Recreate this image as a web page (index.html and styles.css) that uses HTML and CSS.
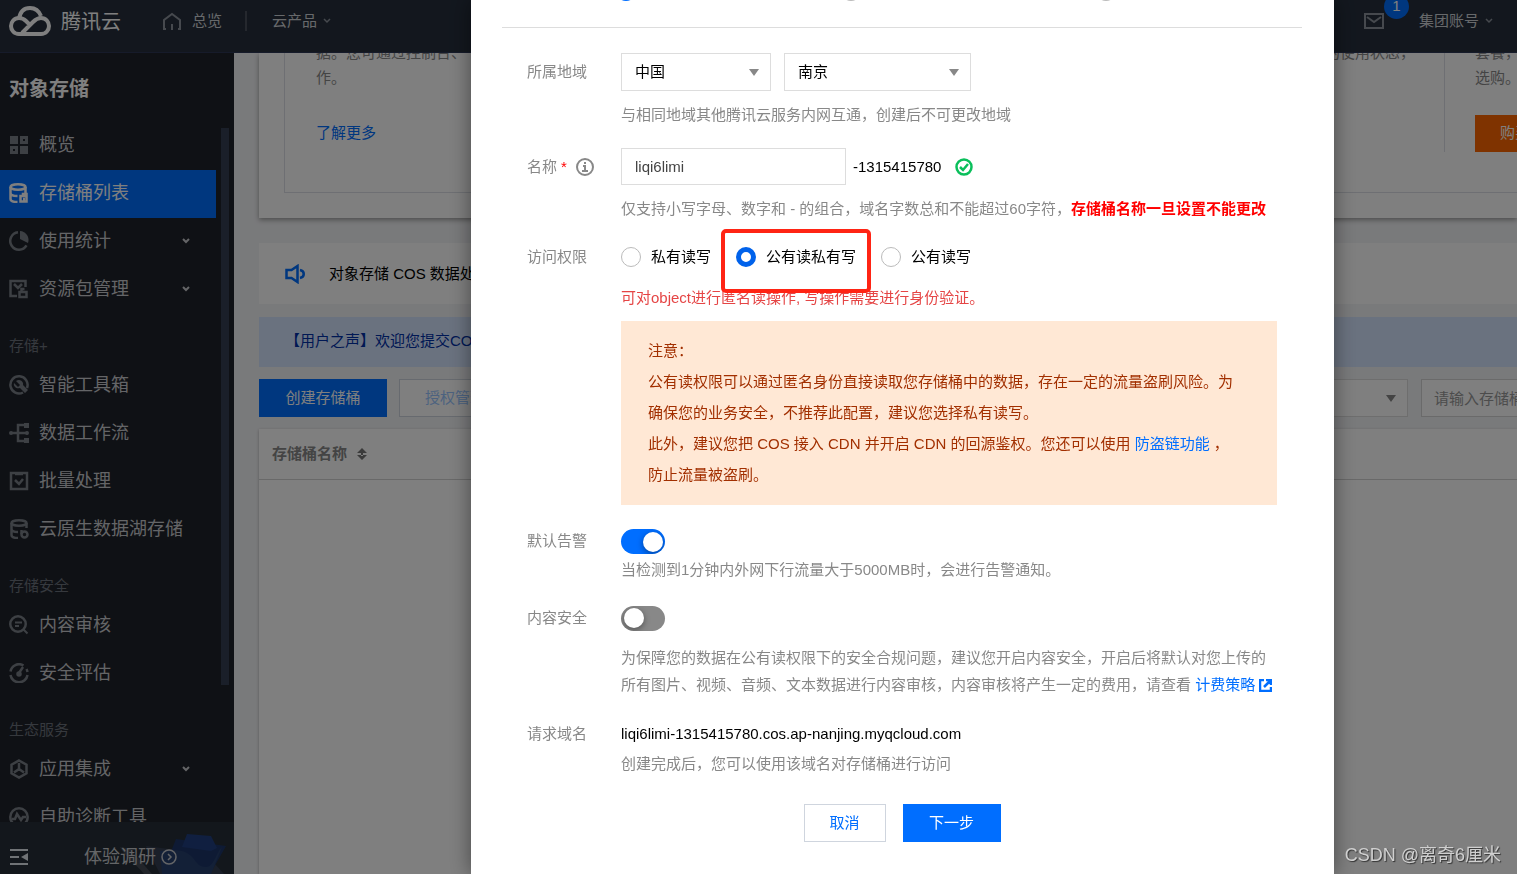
FILE: index.html
```html
<!DOCTYPE html>
<html lang="zh-CN">
<head>
<meta charset="utf-8">
<title>对象存储 - 创建存储桶</title>
<link rel="stylesheet" href="styles.css">
</head>
<body>
<div class="app">
  <header class="topbar">
    <svg class="logo" width="42" height="30" viewBox="0 0 42 30" fill="none" stroke="currentColor" stroke-width="4" stroke-linecap="butt" aria-hidden="true">
      <path d="M10 13C11 6 15 2 21 2c6 0 9 3 11 8"/>
      <path d="M20 18l-3-3c-2-2-4-3-7-3-5 0-8 4-8 8s3 8 8 8h22c5 0 8-4 8-8s-3-8-8-8c-4 0-6 2-8 4L13 27"/>
    </svg>
    <span class="brand">腾讯云</span>
    <a class="toplink home" href="#">
      <svg width="20" height="19" viewBox="0 0 20 19" fill="none" stroke="currentColor" stroke-width="2" aria-hidden="true"><path d="M4 17H2V8l8-6 8 6v9h-2M10 12v6"/></svg>
      总览
    </a>
    <span class="divider"></span>
    <a class="toplink products" href="#">云产品
      <svg width="8" height="6" viewBox="0 0 8 6" fill="none" stroke="currentColor" stroke-width="1.5" aria-hidden="true"><path d="M1 1l3 3 3-3"/></svg>
    </a>
    <a class="mail" href="#" aria-label="消息">
      <svg width="20" height="16" viewBox="0 0 20 16" fill="none" stroke="currentColor" stroke-width="2" aria-hidden="true"><path d="M1 1h18v14H1zM3 4l7 5 7-5"/></svg>
      <span class="badge">1</span>
    </a>
    <a class="toplink" href="#">集团账号
      <svg width="8" height="6" viewBox="0 0 8 6" fill="none" stroke="currentColor" stroke-width="1.5" aria-hidden="true"><path d="M1 1l3 3 3-3"/></svg>
    </a>
  </header>

  <div class="body">
    <aside class="sidebar">
      <h1 class="side-title">对象存储</h1>
      <nav class="side-nav">
        <div class="side-list">
          <a class="item" href="#"><svg width="20" height="20" viewBox="0 0 20 20" fill="none" stroke="currentColor" stroke-width="3"><path d="M1 1h8v8H1zM11 11h8v8h-8z" fill="currentColor" stroke="none"/><path d="M12.500 2.500h5v5h-5zM2.500 12.500h5v5h-5z"/></svg>概览</a>
          <a class="item active" href="#"><svg width="20" height="20" viewBox="0 0 20 20" fill="none" stroke="currentColor" stroke-width="2.500"><ellipse cx="9" cy="4" rx="7.500" ry="2.750"/><path d="M1.500 4v12c0 2 3 3 7 3M1.500 10c0 2 3 3 7 3M16.500 4v6"/><path d="M11.500 13h6v5.500h-6zM14 13v-2h3.500v2M14 16h2"/></svg>存储桶列表</a>
          <a class="item" href="#"><svg width="20" height="20" viewBox="0 0 20 20" fill="none" stroke="currentColor" stroke-width="2.500"><path d="M9 1.300a8.700 8.700 0 1 0 8.500 13"/><path d="M11 0a9 9 0 0 1 8 12l-8-4z" fill="currentColor" stroke="none"/></svg>使用统计<svg class="arrow" width="8" height="6" viewBox="0 0 8 6" fill="none" stroke="currentColor" stroke-width="2"><path d="M1 1l3 3 3-3"/></svg></a>
          <a class="item" href="#"><svg width="20" height="20" viewBox="0 0 20 20" fill="none" stroke="currentColor" stroke-width="2.500"><path d="M8 17H1.500V2h15v6M5 5l4 4 4-4"/><path d="M10.500 13h7v5h-7zM12.500 13v-3h3"/></svg>资源包管理<svg class="arrow" width="8" height="6" viewBox="0 0 8 6" fill="none" stroke="currentColor" stroke-width="2"><path d="M1 1l3 3 3-3"/></svg></a>
          <h2 class="group">存储+</h2>
          <a class="item" href="#"><svg width="20" height="20" viewBox="0 0 20 20" fill="none" stroke="currentColor" stroke-width="2.500"><path d="M14 17.500A8.600 8.600 0 1 1 18 13"/><path d="M5 8l4 4 2-2-4-4c4-3 8 1 7 4l5 5-3 3-5-5c-3 1-7-1-6-5z" fill="currentColor" stroke="none"/></svg>智能工具箱</a>
          <a class="item" href="#"><svg width="20" height="20" viewBox="0 0 20 20" fill="none" stroke="currentColor" stroke-width="2.500"><path d="M2 10h17M15 2H9v16h6"/><path d="M15 0h5v5h-5zM15 15h5v5h-5z" fill="currentColor" stroke="none"/><circle cx="2" cy="10" r="2" fill="currentColor" stroke="none"/><circle cx="18" cy="10" r="2" fill="currentColor" stroke="none"/></svg>数据工作流</a>
          <a class="item" href="#"><svg width="20" height="20" viewBox="0 0 20 20" fill="none" stroke="currentColor" stroke-width="2.500"><path d="M2 2h16v16H2zM6 3h8M6 9l4 4 4-5"/></svg>批量处理</a>
          <a class="item" href="#"><svg width="20" height="20" viewBox="0 0 20 20" fill="none" stroke="currentColor" stroke-width="2.500"><ellipse cx="10" cy="4" rx="7.500" ry="2.750"/><path d="M2.500 4v12c0 2 3 3 6.500 3M2.500 10c0 2 3 3 6.500 3M17.500 4v5"/><circle cx="15.500" cy="15.500" r="3"/><path d="M12.500 11v4"/></svg>云原生数据湖存储</a>
          <h2 class="group">存储安全</h2>
          <a class="item" href="#"><svg width="20" height="20" viewBox="0 0 20 20" fill="none" stroke="currentColor" stroke-width="2.500"><circle cx="9" cy="9" r="7.750"/><path d="M14.500 14.500l4 4M6 7.500h7M6 11h4" stroke-width="2"/></svg>内容审核</a>
          <a class="item" href="#"><svg width="20" height="20" viewBox="0 0 20 20" fill="none" stroke="currentColor" stroke-width="2.500"><path d="M1.500 8.500a8.600 8.600 0 0 1 13-6M17.500 6a8.600 8.600 0 0 1 1 3M1.500 12a8.600 8.600 0 0 0 17 0M10 10l4-6"/><circle cx="10" cy="11" r="2.750" fill="currentColor" stroke="none"/></svg>安全评估</a>
          <h2 class="group">生态服务</h2>
          <a class="item" href="#"><svg width="20" height="20" viewBox="0 0 20 20" fill="none" stroke="currentColor" stroke-width="2.500"><path d="M10 1.500l7.500 4.200v8.600L10 18.500l-7.500-4.200V5.700zM10 4v6l-5 3.500M10 10l5 3.500"/></svg>应用集成<svg class="arrow" width="8" height="6" viewBox="0 0 8 6" fill="none" stroke="currentColor" stroke-width="2"><path d="M1 1l3 3 3-3"/></svg></a>
          <a class="item" href="#"><svg width="20" height="20" viewBox="0 0 20 20" fill="none" stroke="currentColor" stroke-width="2.500"><circle cx="10" cy="10" r="8.700"/><path d="M3 12h3l2-5 4 6 2-3h3"/></svg>自助诊断工具</a>
        </div>
        <div class="thumb"></div>
      </nav>
      <div class="side-foot">
        <svg class="art" width="115" height="52" viewBox="0 0 115 52" aria-hidden="true">
          <path d="M4 25l10 2 22 25H28C18 40 10 36 4 25z" fill="#454a54"/>
          <path d="M30 24l60 8 18 20H44z" fill="#343e52"/>
          <path d="M60 17l50 7-16 28H46z" fill="#1d3568"/>
          <path d="M71 12l24 2 6 12-6 3-29-4z" fill="#203f80"/>
          <path d="M44 29c40-6 30 16 46 16 8 0 10-14 16-20l-11 27H46z" fill="#27406f"/>
        </svg>
        <button class="fold" type="button" aria-label="收起菜单"><svg width="18" height="16" viewBox="0 0 18 16" fill="none" stroke="currentColor" stroke-width="2"><path d="M0 1h18M0 8h9M0 15h18"/><path d="M18 4v8l-7-4z" fill="currentColor" stroke="none"/></svg></button>
        <a class="survey" href="#">体验调研<svg width="16" height="16" viewBox="0 0 16 16" fill="none" stroke="currentColor" stroke-width="1.500"><circle cx="8" cy="8" r="7"/><path d="M7 5l3 3-3 3"/></svg></a>
      </div>
    </aside>

    <main class="main">
      <section class="intro">
        <div class="intro-box">
          <div class="col first"><p>据。您可通过控制台、<br>作。</p><a href="#">了解更多</a></div>
          <div class="col second"><p>的使用状态，</p></div>
          <div class="col third"><p>套餐，<br>选购。</p><button type="button">购买</button></div>
        </div>
      </section>
      <section class="notice">
        <svg width="20" height="20" viewBox="0 0 20 20" fill="none" stroke="currentColor" stroke-width="2.500" aria-hidden="true"><path d="M1.500 6h5l6-4v16l-6-4h-5zM15 6c5 1 5 7 0 8"/></svg>
        对象存储 COS 数据处理
      </section>
      <section class="voice">【用户之声】欢迎您提交COS</section>
      <div class="toolbar">
        <button class="btn create" type="button">创建存储桶</button>
        <button class="btn auth" type="button">授权管理</button>
        <span class="pick filter"><select aria-label="筛选"><option></option></select></span>
        <input class="search" type="text" aria-label="搜索存储桶" placeholder="请输入存储桶名称">
      </div>
      <table class="buckets">
        <thead><tr><th scope="col">存储桶名称<svg width="10" height="12" viewBox="0 0 10 12" fill="currentColor" aria-hidden="true"><path d="M5 0l5 5H0zM5 12l5-5H0zM4 4h2v4H4z"/></svg></th></tr></thead>
      </table>
    </main>
  </div>
</div>

<div class="overlay">
  <div class="dialog" role="dialog" aria-label="创建存储桶">
    <div class="steps"><i class="on"></i><i class="mid"></i><i></i></div>
    <form class="form">
      <div class="row">
        <label class="name tall" for="country">所属地域</label>
        <div class="field">
          <div class="line regions">
            <span class="pick country"><select id="country"><option>中国</option></select></span>
            <span class="pick city"><select aria-label="城市"><option>南京</option></select></span>
          </div>
          <p class="help">与相同地域其他腾讯云服务内网互通，创建后不可更改地域</p>
        </div>
      </div>
      <div class="row">
        <label class="name tall" for="bucket">名称<b>*</b><svg width="18" height="18" viewBox="0 0 18 18" fill="none" stroke="currentColor" stroke-width="2" aria-hidden="true"><circle cx="9" cy="9" r="8"/><path d="M7 8h2v5M6 13h6M8 5h2"/></svg></label>
        <div class="field">
          <div class="line">
            <input class="bucket" id="bucket" type="text" value="liqi6limi">
            <span class="suffix">-1315415780</span>
            <svg class="ok" width="18" height="18" viewBox="0 0 18 18" fill="none" stroke="currentColor" stroke-width="2.500" aria-hidden="true"><circle cx="9" cy="9" r="7.500"/><path d="M5 9l3 3 5-6"/></svg>
          </div>
          <p class="help">仅支持小写字母、数字和 - 的组合，域名字数总和不能超过60字符，<strong>存储桶名称一旦设置不能更改</strong></p>
        </div>
      </div>
      <div class="row">
        <span class="name" id="access">访问权限</span>
        <div class="field">
          <div class="line radios" role="radiogroup" aria-labelledby="access">
            <label><input type="radio" name="acl">私有读写</label>
            <label class="marked"><input type="radio" name="acl" checked>公有读私有写</label>
            <label><input type="radio" name="acl">公有读写</label>
          </div>
          <p class="help warn">可对object进行匿名读操作, 写操作需要进行身份验证。</p>
          <div class="caution">
            <p>注意：</p>
            <p>公有读权限可以通过匿名身份直接读取您存储桶中的数据，存在一定的流量盗刷风险。为确保您的业务安全，不推荐此配置，建议您选择私有读写。</p>
            <p>此外，建议您把 COS 接入 CDN 并开启 CDN 的回源鉴权。您还可以使用 <a href="#">防盗链功能</a> ，防止流量被盗刷。</p>
          </div>
        </div>
      </div>
      <div class="row">
        <label class="name" for="alarm">默认告警</label>
        <div class="field">
          <input class="switch" id="alarm" type="checkbox" checked>
          <p class="help near">当检测到1分钟内外网下行流量大于5000MB时，会进行告警通知。</p>
        </div>
      </div>
      <div class="row">
        <label class="name" for="safety">内容安全</label>
        <div class="field">
          <input class="switch" id="safety" type="checkbox">
          <p class="help long">为保障您的数据在公有读权限下的安全合规问题，建议您开启内容安全，开启后将默认对您上传的所有图片、视频、音频、文本数据进行内容审核，内容审核将产生一定的费用，请查看 <a href="#">计费策略<svg width="13" height="13" viewBox="0 0 13 13" fill="none" stroke="currentColor" stroke-width="2.500" aria-hidden="true"><path d="M5 1H1v11h11V8M5 8l6-6M7 1h5v5"/></svg></a></p>
        </div>
      </div>
      <div class="row last">
        <span class="name">请求域名</span>
        <div class="field">
          <p class="domain">liqi6limi-1315415780.cos.ap-nanjing.myqcloud.com</p>
          <p class="help after">创建完成后，您可以使用该域名对存储桶进行访问</p>
        </div>
      </div>
      <div class="actions">
        <button class="btn cancel" type="button">取消</button>
        <button class="btn next" type="button">下一步</button>
      </div>
    </form>
  </div>
</div>
<div class="watermark">CSDN @离奇6厘米</div>
</body>
</html>
```
FILE: styles.css
```css
* { box-sizing: border-box; }
body, p, h1, h2 { margin: 0; }
body, button, input, select {
  font-family: "Liberation Sans", "Noto Sans CJK SC", sans-serif;
  font-size: 15px;
  line-height: 24px;
}
body { overflow: hidden; color: #000; }
a { color: #006eff; text-decoration: none; }
svg { flex: none; }
button { padding: 0; border: 0; background: none; white-space: nowrap; }

.app { display: flex; flex-direction: column; height: 100vh; background: #f3f4f7; }

/* Top bar */
.topbar {
  display: flex; align-items: center; flex: none;
  height: 53px; padding: 0 24px 10px 9px;
  background: #262f3d; border-bottom: 1px solid #2c3654; color: #cfd2d6;
}
.logo { margin-right: 10px; color: #fff; }
.brand { padding-top: 2px; font-size: 20px; line-height: 30px; color: #fff; }
.toplink { display: flex; align-items: center; gap: 10px; color: #cfd2d6; white-space: nowrap; }
.toplink svg { color: #8d939c; }
.home { margin-left: 41px; }
.divider { width: 2px; height: 20px; margin: 0 25px 0 23px; background: #4a515c; }
.products, .toplink:last-child { gap: 6px; }
.mail { position: relative; display: flex; margin-left: auto; margin-right: 35px; color: #8d939c; }
.badge {
  position: absolute; left: 20px; bottom: 10px;
  width: 25px; height: 25px; border-radius: 13px;
  background: #006eff; color: #fff; text-align: center;
}

.body { display: flex; flex: 1; min-height: 0; }

/* Side menu */
.sidebar { display: flex; flex-direction: column; flex: none; width: 234px; background: #1f222a; }
.side-title { padding: 21px 9px 18px; font-size: 20px; line-height: 30px; color: #fff; }
.side-nav { display: flex; flex: 1; min-height: 0; overflow: hidden; }
.side-list { width: 216px; }
.item {
  display: flex; align-items: center; gap: 10px;
  height: 48px; padding: 0 26px 2px 9px;
  font-size: 18px; color: #c8cace; white-space: nowrap;
}
.item svg { color: #7a8088; }
.item .arrow { margin-left: auto; color: #c8cace; }
.item.active { background: #006eff; color: #fff; }
.item.active svg { color: #fff; }
.group { height: 48px; padding: 20px 9px 4px; font-size: 15px; font-weight: 400; color: #6c727c; }
.thumb { width: 8px; height: 557px; margin: 6px 0 0 5px; background: #343f52; }
.side-foot { position: relative; display: flex; align-items: center; flex: none; height: 52px; padding: 18px 10px 0; background: #262f38; overflow: hidden; }
.art { position: absolute; right: 3px; bottom: 0; }
.fold { position: relative; display: flex; width: 18px; color: #e0e6ec; }
.survey { position: relative; display: flex; align-items: center; gap: 5px; margin-left: 56px; font-size: 18px; color: #c8cace; }

/* Page content behind the dialog */
.main { display: flex; flex-direction: column; flex: 1; min-width: 0; padding-left: 25px; overflow: hidden; }
.intro { flex: none; padding: 0 0 25px 25px; margin-bottom: 25px; background: #fff; box-shadow: 0 2px 5px #9a9a9a; }
.intro-box { display: flex; height: 140px; border: 1px solid #dcdfe6; border-width: 0 0 1px 1px; overflow: hidden; color: #888; line-height: 25px; }
.col p { margin-top: -13px; white-space: nowrap; }
.first { flex: 1; padding-left: 31px; }
.first a { display: block; margin-top: 30px; }
.second { flex: 1; height: 99px; padding-right: 29px; border-right: 1px solid #dcdfe6; text-align: right; }
.third { width: 72px; padding-left: 30px; overflow: hidden; }
.third button { width: 100px; height: 37px; margin-top: 25px; padding: 0 0 1px 25px; background: #ff6600; color: #fff; text-align: left; }
.notice { display: flex; align-items: center; gap: 24px; flex: none; height: 61px; padding-left: 26px; margin-bottom: 13px; background: #fff; }
.notice svg { color: #006eff; }
.voice { flex: none; height: 50px; margin-bottom: 12px; padding-left: 26px; background: #d5e5ff; color: #0030a8; line-height: 48px; }
.toolbar { display: flex; flex: none; margin-bottom: 12px; }
.btn { height: 38px; padding-bottom: 1px; border: 1px solid transparent; }
.create { width: 128px; background: #006eff; color: #fff; }
.auth { width: 112px; margin-left: 12px; border-color: #cfd5de; background: #fff; color: #99c5ff; }
.filter { width: 187px; margin: 0 13px 0 auto; }
.search { width: 96px; height: 38px; padding: 0 0 0 12px; border: 1px solid #d5d5d5; border-right: 0; border-radius: 0; }
.search::placeholder { color: #999; opacity: 1; }
.buckets { width: 100%; height: 445px; border-collapse: collapse; background: #fff; box-shadow: 0 1px 3px #b0b0b0; }
.buckets thead { display: table; width: 100%; border-bottom: 1px solid #d2d2d2; }
.buckets th { height: 50px; padding: 0 13px; text-align: left; color: #888; }
.buckets svg { margin-left: 10px; vertical-align: -1px; color: #777; }

/* Shared controls */
.pick { position: relative; display: block; height: 38px; }
.pick select {
  appearance: none; width: 100%; height: 38px; padding: 0 30px 0 13px;
  border: 1px solid #ddd; border-radius: 0; background: #fff; color: #000;
}
.pick::after {
  content: ""; position: absolute; right: 12px; top: 16px;
  border: 5px solid transparent; border-top: 7px solid #888; border-bottom: 0;
}

/* Dialog */
.overlay { position: fixed; inset: 0; display: flex; justify-content: center; padding-left: 288px; background: rgba(0, 0, 0, .5); }
.dialog { width: 863px; padding: 0 32px 0 31px; overflow: hidden; background: #fff; box-shadow: 0 0 20px rgba(0, 0, 0, .45); }
.steps { display: flex; height: 47px; margin-top: -19px; padding-left: 114px; border-bottom: 1px solid #ddd; }
.steps i { width: 20px; height: 20px; border-radius: 10px; background: #bbb; }
.steps .on { margin-right: 205px; background: #006eff; }
.steps .mid { margin-right: 235px; }
.form { padding: 25px 25px 0; }
.row { display: flex; margin-bottom: 24px; }
.row:first-child { margin-bottom: 21px; }
.row.last { margin-bottom: 22px; }
.name { display: flex; align-items: center; flex: none; width: 94px; height: 24px; color: #888; }
.name.tall { height: 37px; }
.name b { margin: 0 9px 0 4px; font-weight: 400; color: #f00; }
.field { flex: 1; min-width: 0; }
.line { display: flex; align-items: center; }
.regions { gap: 13px; }
.country { width: 150px; }
.city { width: 187px; }
.help { margin-top: 12px; color: #888; }
.help strong { color: #f00; }
.bucket { width: 225px; height: 37px; padding: 0 13px; border: 1px solid #ddd; border-radius: 0; color: #444; }
.suffix { margin: 0 14px 0 7px; }
.ok { color: #0abf5b; }
.radios { gap: 25px; height: 24px; }
.radios label { position: relative; display: flex; align-items: center; gap: 10px; white-space: nowrap; }
.radios input { appearance: none; width: 20px; height: 20px; margin: 0; border: 1px solid #bbb; border-radius: 10px; }
.radios input:checked { border: 5px solid #0062eb; }
.marked::after { content: ""; position: absolute; inset: -16px -15px -24px; border: 4px solid #ff2414; border-radius: 5px; }
.help.warn { margin-top: 17px; color: #e54545; }
.caution { margin-top: 11px; padding: 14px 40px 15px 27px; background: #ffe8d5; color: #a22f00; line-height: 31px; }
.switch { appearance: none; display: block; width: 44px; height: 25px; margin: 0; padding: 2px 3px; border-radius: 13px; background: #888; overflow: hidden; }
.switch::before { content: ""; display: block; width: 20px; height: 20px; border-radius: 10px; background: #fff; box-shadow: 0 2px 6px rgba(0, 0, 0, .4); }
.switch:checked { padding: 3px 2px 2px 22px; background: #006eff; }
.help.near { margin-top: 4px; }
.help.after { margin-top: 6px; }
.help.long { margin-top: 13px; line-height: 27px; }
.help svg { margin-left: 4px; vertical-align: -2px; }
.actions { display: flex; justify-content: center; gap: 17px; padding-top: 6px; }
.cancel { width: 82px; border-color: #cfd5de; background: #fff; color: #006eff; }
.next { width: 98px; background: #006eff; color: #fff; }

.watermark { position: fixed; right: 16px; bottom: 6px; font-size: 18px; line-height: 26px; color: #d0d0d0; text-shadow: 1px 1px 1px #333; }
```
